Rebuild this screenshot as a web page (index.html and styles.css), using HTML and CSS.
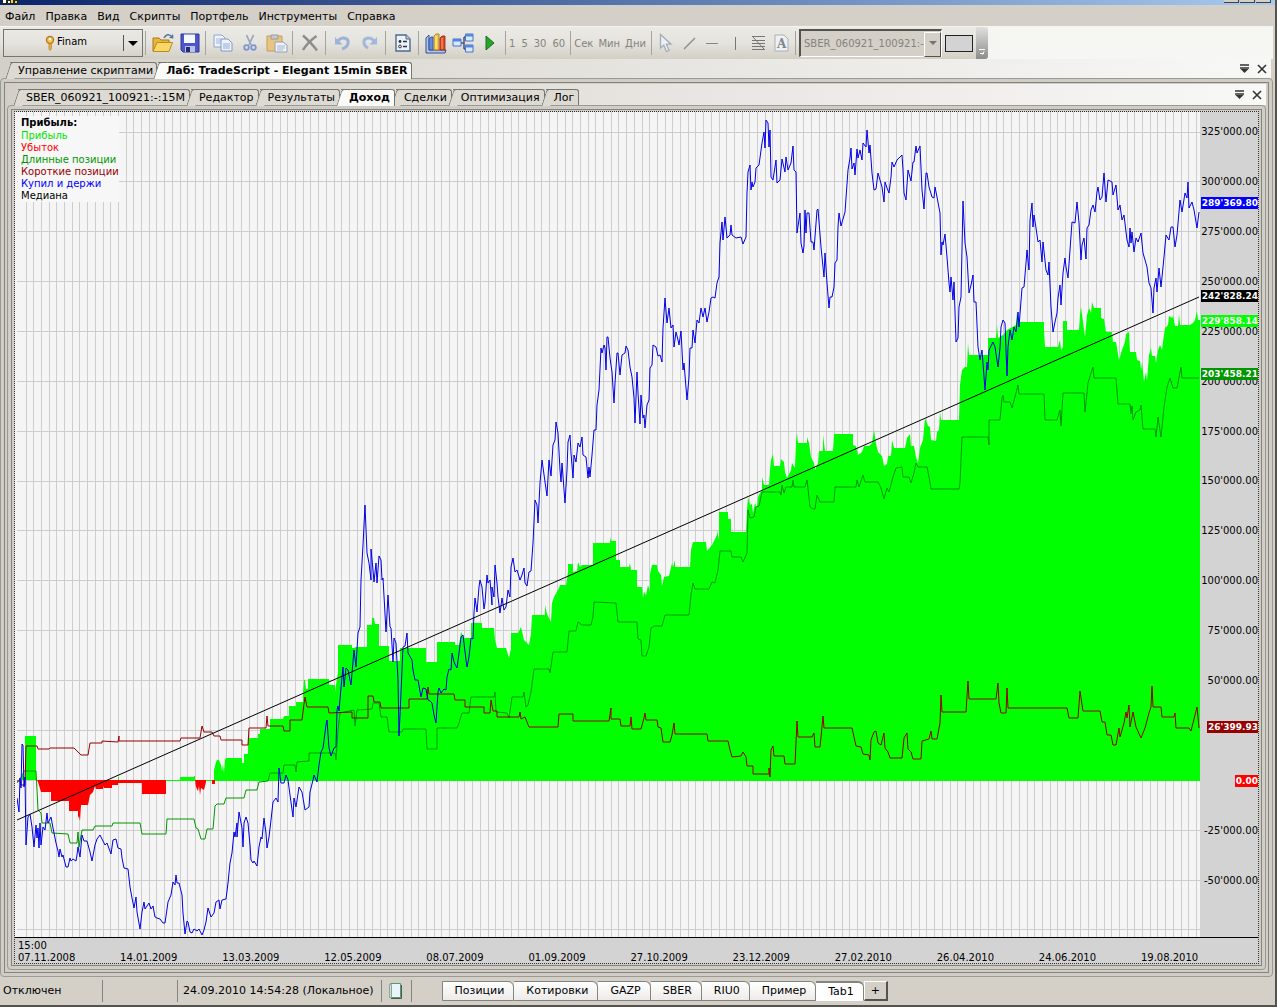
FILE: index.html
```html
<!DOCTYPE html>
<html lang="ru">
<head>
  <meta charset="UTF-8" />
  <meta name="viewport" content="width=device-width, initial-scale=1.0"/>
  <title>TSLab</title>
  <link rel="stylesheet" href="styles.css">
</head>
<body>
<div class="window">
  <header class="titlebar">
    <svg class="title-icon" width="16" height="4" viewBox="0 0 16 4"><path d="M0 0h16v4H0z" fill="#222"/><path d="M1 0h3v3H1zM6 1h2v2H6z" fill="#fff"/><path d="M9 0h2v3H9zM13 1h2v2h-2z" fill="#f2d43c"/></svg>
    <div class="title-buttons"><span></span><span></span><span></span></div>
  </header>

  <nav class="menubar">
    <a href="#">Файл</a>
    <a href="#">Правка</a>
    <a href="#">Вид</a>
    <a href="#">Скрипты</a>
    <a href="#">Портфель</a>
    <a href="#">Инструменты</a>
    <a href="#">Справка</a>
  </nav>

  <div class="tray">
    <div class="toolbar">
      <div class="provider">
        <svg class="key" width="10" height="16" viewBox="0 0 10 16"><circle cx="5" cy="5" r="3.5" fill="#f5c45c" stroke="#b87a1c" stroke-width="1.4"/><circle cx="5" cy="4" r="1.2" fill="#fff"/><path d="M4 8.5h2.4v5L5 15.500 4 14z" fill="#eeb048" stroke="#b87a1c" stroke-width=".7"/></svg>
        <select aria-label="Поставщик данных"><option>Finam</option></select>
      </div>
      <i class="sep"></i>
      <button class="tool" aria-label="Открыть"><svg width="22" height="20" viewBox="0 0 22 20"><path d="M1 18V5h6l2 2h8v4" fill="#e9b437" stroke="#a97a18"/><path d="M1 18.500 5 9.500h15.500L17 18.500z" fill="#fbd768" stroke="#b98a20"/><path d="M12 5c2-4 5-4 7-2" fill="none" stroke="#54779c" stroke-width="1.600"/><path d="M17 5l4.500.5L21 1z" fill="#54779c"/></svg></button>
      <button class="tool" aria-label="Сохранить"><svg width="20" height="20" viewBox="0 0 20 20"><path d="M1 1h18v18H3l-2-2z" fill="#4c55c9" stroke="#31379a"/><path d="M4 1.500h11V10H4z" fill="#f6f8ff"/><path d="M5 13h10v6H5z" fill="#b9c3e8"/><path d="M6 14h4v5H6z" fill="#252a72"/></svg></button>
      <i class="sep"></i>
      <button class="tool" disabled aria-label="Копировать"><svg width="20" height="18" viewBox="0 0 20 18"><path d="M1 1h8l3 3v9H1z" fill="#edf2fb" stroke="#8ea6cf"/><path d="M3 5h5M3 7h7M3 9h7" stroke="#a4b9dc"/><path d="M8 5h7l4 4v8H8z" fill="#edf2fb" stroke="#8198c4"/><path d="M10 10h7M10 12h7M10 14h7" stroke="#94abd3"/></svg></button>
      <button class="tool" disabled aria-label="Вырезать"><svg width="14" height="18" viewBox="0 0 14 18"><path d="M3.500 1 8 11M10.500 1 6 11" stroke="#9aa7bd" stroke-width="1.800" fill="none"/><circle cx="3.500" cy="13.500" r="2.300" fill="none" stroke="#7d96cf" stroke-width="1.800"/><circle cx="10.500" cy="13.500" r="2.300" fill="none" stroke="#7d96cf" stroke-width="1.800"/></svg></button>
      <button class="tool" disabled aria-label="Вставить"><svg width="22" height="19" viewBox="0 0 22 19"><path d="M1 2h15v15H1z" fill="#e9c581" stroke="#c39f5c"/><path d="M5 1h7v4H5z" fill="#c6c9cf" stroke="#989ba3"/><path d="M9 8h8l4 3v7H9z" fill="#eff2f8" stroke="#93a0b6"/><path d="M11 12h8M11 14h8M11 16h6" stroke="#a9b6ca"/></svg></button>
      <i class="sep"></i>
      <button class="tool" disabled aria-label="Удалить"><svg width="18" height="18" viewBox="0 0 18 18"><path d="M2 1.500C7 6 12 11 16 16.500M15.500 2C10 6 5 11 2 16" fill="none" stroke="#8d8d8b" stroke-width="2.400"/></svg></button>
      <i class="sep"></i>
      <button class="tool" disabled aria-label="Отменить"><svg width="17" height="16" viewBox="0 0 17 16"><path d="M4 6C8 1 15 3 14 8c0 3-3 5-6 6" fill="none" stroke="#9db1da" stroke-width="3"/><path d="M1 2v7.500h7.500z" fill="#9db1da"/></svg></button>
      <button class="tool" disabled aria-label="Вернуть"><svg width="17" height="16" viewBox="0 0 17 16"><path d="M13 6C9 1 2 3 3 8c0 3 2 4 4 5" fill="none" stroke="#9fb8dc" stroke-width="3"/><path d="M16 2v7.500H8.500z" fill="#9fb8dc"/></svg></button>
      <i class="sep"></i>
      <button class="tool" aria-label="Свойства"><svg width="16" height="18" viewBox="0 0 16 18"><path d="M1 1h10l4 4v12H1z" fill="#eaf2fb" stroke="#52698c" stroke-width="1.400"/><path d="M11 1v4h4" fill="#bccde4" stroke="#52698c"/><circle cx="5" cy="7.500" r="1.400" fill="#333"/><circle cx="5" cy="12.500" r="1.400" fill="none" stroke="#333"/><path d="M8 7.500h4M8 12.500h4" stroke="#333" stroke-width="1.500"/></svg></button>
      <i class="sep"></i>
      <button class="tool" aria-label="Лаборатория"><svg width="22" height="21" viewBox="0 0 22 21"><path d="M1 5v15h19l1-3H4V2z" fill="#b6c6e4" stroke="#35518e"/><path d="M4 6l2-2h2v13H4z" fill="#5f8be0" stroke="#2c4b98" stroke-width=".8"/><path d="M9 3l2-2h3v16H9z" fill="#f6c644" stroke="#9a7418" stroke-width=".8"/><path d="M15 5l2-2h3v14h-5z" fill="#e34a2c" stroke="#8c2312" stroke-width=".8"/><path d="M11 3v13" stroke="#fff0b0"/><path d="M17 5v11" stroke="#ff9a7c"/></svg></button>
      <button class="tool" aria-label="Схема"><svg width="22" height="20" viewBox="0 0 22 20"><path d="M8 10h4M12 4v12M12 4h3M12 16h3" fill="none" stroke="#46566f" stroke-width="1.500"/><path d="M1 6h8v7H1zM13.500 1h7.500v7h-7.500zM13.500 12H21v7h-7.500z" fill="#d9e8ff" stroke="#4772c8"/><path d="M1 6h8v2.500H1zM13.500 1h7.500v2.500h-7.500zM13.500 12H21v2.500h-7.500z" fill="#5686df"/></svg></button>
      <button class="tool" aria-label="Запуск"><svg width="10" height="16" viewBox="0 0 10 16"><path d="M1 1l8 7-8 7z" fill="#27a52b" stroke="#16701b"/></svg></button>
      <i class="sep"></i>
      <div class="intervals">
        <button disabled>1</button>
        <button disabled>5</button>
        <button disabled>30</button>
        <button disabled>60</button>
      </div>
      <i class="sep"></i>
      <div class="units">
        <button disabled>Сек</button>
        <button disabled>Мин</button>
        <button disabled>Дни</button>
      </div>
      <i class="sep"></i>
      <button class="tool small" disabled aria-label="Указатель"><svg width="14" height="20" viewBox="0 0 14 20"><path d="M1.500 1.500v13.500l3.300-3 2.600 6.500 2.600-1-2.600-6.300H12z" fill="#edf0f4" stroke="#a3adba" stroke-width="1.300"/></svg></button>
      <button class="tool small" disabled aria-label="Линия"><svg width="13" height="13" viewBox="0 0 13 13"><path d="M1 12 12 1" stroke="#888" stroke-width="1.300"/></svg></button>
      <button class="tool small" disabled aria-label="Горизонтальная линия"><svg width="12" height="3" viewBox="0 0 12 3"><path d="M0 1.500h12" stroke="#888"/></svg></button>
      <button class="tool small" disabled aria-label="Вертикальная линия"><svg width="3" height="13" viewBox="0 0 3 13"><path d="M1.500 0v13" stroke="#777"/></svg></button>
      <button class="tool small" disabled aria-label="Уровни Фибоначчи"><svg width="13" height="14" viewBox="0 0 13 14"><path d="M0 .5h13M0 4.500h13M0 7.500h13M0 10.500h13M0 13.500h13M1 1l11 12" stroke="#777" fill="none"/></svg></button>
      <button class="tool small" disabled aria-label="Текст"><svg width="15" height="18" viewBox="0 0 15 18"><path d="M1 1h9l4 4v12H1z" fill="#eef0f2" stroke="#a8b0ba"/><text x="3" y="14" class="letter">A</text></svg></button>
      <i class="sep"></i>
      <div class="source">
        <select disabled aria-label="Источник"><option>SBER_060921_100921:-</option></select>
      </div>
      <button class="swatch" aria-label="Цвет"></button>
      <button class="overflow" aria-label="Ещё"><svg width="6" height="6" viewBox="0 0 6 6"><path d="M0 .5h6M1 4.500h4M5 2.500 3.500 5.500" stroke="#fff" fill="none"/></svg></button>
    </div>
  </div>

  <div class="tabs tabs-main">
    <a href="#" class="tab">Управление скриптами</a>
    <a href="#" class="tab active">Лаб: TradeScript - Elegant 15min SBER</a>
    <div class="tab-tools">
      <button aria-label="Список"><svg width="9" height="9" viewBox="0 0 9 9"><path d="M0 1h9M0 4h9" stroke="#333" stroke-width="1.400"/><path d="M.5 5h8l-4 4z" fill="#333"/></svg></button>
      <button aria-label="Закрыть"><svg width="10" height="10" viewBox="0 0 10 10"><path d="M1 1l8 8M9 1 1 9" stroke="#333" stroke-width="1.600"/></svg></button>
    </div>
  </div>

  <main class="frame outer">
    <div class="frame-body">
      <div class="tabs">
        <a href="#" class="tab">SBER_060921_100921:-:15M</a>
        <a href="#" class="tab">Редактор</a>
        <a href="#" class="tab">Результаты</a>
        <a href="#" class="tab active">Доход</a>
        <a href="#" class="tab">Сделки</a>
        <a href="#" class="tab">Оптимизация</a>
        <a href="#" class="tab">Лог</a>
        <div class="tab-tools">
          <button aria-label="Список"><svg width="9" height="9" viewBox="0 0 9 9"><path d="M0 1h9M0 4h9" stroke="#333" stroke-width="1.400"/><path d="M.5 5h8l-4 4z" fill="#333"/></svg></button>
          <button aria-label="Закрыть"><svg width="10" height="10" viewBox="0 0 10 10"><path d="M1 1l8 8M9 1 1 9" stroke="#333" stroke-width="1.600"/></svg></button>
        </div>
      </div>
      <section class="frame inner">
        <div class="frame-body">
          <div class="chart">
            <div class="plot">
              <svg class="plot-svg" viewBox="17 112 1183 825" preserveAspectRatio="none">
                <path id="grid" class="grid" d=""/>
                <path class="profit" d="M22 780V776H24V780zM25 780V736H36V780zM118 780V777H119V780zM166 781V780H180V777H194V776H195V780H214V781z"/>
                <path class="profit" d="M214 780V770L216 762 217 760H219L221 765 222 771 223 764 224 773 225 760 226 758H242V763H244V754H248V738H258V734H260V729H270V719H283L284 716H289V706H296V702H303V694L304 680H305L306 689H308V679H329V685H335V692L338 672V645H352V648H354L356 647H367V625H372V618H374L375 624H379V646H389V661H400V648H426V662H437V642H455V645H459L461 632 464 638H471V623H482V628H494L495 640 497 648H506L509 658 511 648V633H518L521 627 524 640 529 645 531 634 532 615H545V605L547 614 551 622 552 603 554 597 559 588 560 585H566L568 572V564H573V572L577 571 578 562 580 567 582 565H593V543H610V537L611 541H616V560H620V567H629L630 563 631 570H637V587H642L643 598 644 592 646 595 648 585 650 592V574L652 565H657L658 571 661 575 662 586 664 577 669 576 672 563 673 567 675 560V567H690L691 550 693 542H706L707 551 712 545 717 535V530L719 540V512H728V519H731V532H746L747 510 748 497 750 505 752 504 753 513 755 503 757 508 758 497 760 493 762 490V477L764 485H769L770 470 771 460 773 454 774 466H780L781 459 784 462 785 472 787 478 791 470 792 463 795 468 796 443 797 433 798 443H807V437L809 443 811 457 814 463 815 470 818 463 819 451H823V435L825 451H833L834 434H853V445L856 446 858 455 862 452 864 446H869L872 443 874 430 876 444 878 452 882 456 884 466 887 464 888 456H891L892 440 894 448H905L907 438 910 434 911 446H914L916 457 918 463 920 448 923 440 925 418 928 426 930 427 931 440 936 441 937 432 939 430 940 412 941 420H959L960 385 962 370 965 367H967L968 343 969 355H988V338H996L997 325 998 338 1003 335 1007 330 1016 325 1017 312 1019 322H1044V330L1045 347H1058L1060 340 1061 350 1063 347V321H1067V330H1079L1080 315 1081 307 1083 322 1085 337 1087 315 1089 308 1091 313 1092 302 1094 308H1101V318L1104 319 1106 332H1112L1113 342H1116L1119 360 1122 350 1125 342 1126 334 1129 332 1130 352H1136L1137 360 1140 361 1141 370 1142 362 1144 382 1146 372 1147 380 1149 355 1151 348 1152 356H1155L1156 363 1158 350 1160 345 1162 350 1163 342 1165 328 1168 325 1169 316 1172 318 1173 316 1175 326H1178L1179 314 1180 325H1190L1193 323 1195 320 1197 311 1198 320H1200V781H214z"/>
                <path class="loss" d="M37 780 38 782 41 792H51V801H69V811H78V818L79 816 80 821 81 805H88L90 795 93 792 95 786 96 789H103V786L104 788H112V785H118V783H142V794H166V780zM195 780 196 787 198 791 199 786 200 795 201 788 204 790 206 782V780zM212 780V784H215V780z"/>
                <polyline class="line long" points="17,783 22,776 24,771 36,771 37,790 38,810 41,813 42,823 50,823 52,833 68,834 70,843 77,843 78,832 79,847 82,830 93,830 95,826 112,826 113,823 140,823 142,834 166,834 167,819 194,819 196,828 198,829 201,839 205,839 207,829 213,829 215,806 217,804 224,804 226,798 244,798 246,790 257,790 259,782 268,781 270,773 283,773 284,765 295,765 296,772 297,762 309,761 309,753 335,753 336,760 338,730 340,713 354,710 355,726 357,710 372,709 373,703 379,703 381,717 387,717 389,732 402,732 403,729 426,729 427,749 437,749 437,728 457,728 459,723 462,713 469,713 471,697 494,697 495,692 496,712 507,713 509,718 512,697 523,697 524,692 526,707 528,705 531,692 534,669 549,669 550,673 553,652 567,652 569,631 576,631 578,622 582,625 591,625 593,617 594,602 616,603 618,622 637,622 638,639 641,640 642,656 646,656 649,647 651,628 654,626 662,626 665,615 689,615 691,595 693,583 695,589 709,589 712,582 715,583 718,570 720,551 731,551 732,557 741,557 743,562 747,553 748,510 750,518 754,517 756,507 759,506 762,492 780,492 781,495 782,485 784,493 786,487 792,487 793,480 794,487 805,487 807,480 810,507 813,509 815,509 817,495 820,502 834,502 835,487 856,487 857,480 859,487 863,475 865,482 878,482 881,488 884,499 887,488 889,492 893,477 896,468 902,467 903,477 909,477 911,483 914,473 916,463 918,467 927,467 929,477 931,489 959,489 960,483 962,437 988,437 989,445 989,420 1000,420 1002,398 1003,395 1004,402 1010,402 1012,408 1016,393 1018,385 1019,394 1044,394 1045,420 1057,420 1060,410 1061,426 1063,393 1084,393 1085,412 1087,393 1088,383 1091,373 1093,367 1094,378 1116,378 1118,404 1130,404 1131,414 1132,406 1133,420 1136,412 1140,410 1141,405 1143,429 1155,429 1156,437 1158,417 1161,437 1164,407 1167,387 1170,378 1173,388 1177,388 1181,367 1182,378 1199,378"/>
                <polyline class="line short" points="17,781 21,781 21,785 25,785 26,746 37,746 38,749 49,749 50,748 74,748 78,752 81,755 88,755 90,743 102,743 102,741 118,742 119,736 119,741 180,741 181,738 200,738 202,726 204,732 212,732 214,736 220,736 221,740 242,740 242,745 248,745 249,728 266,728 267,716 268,726 283,726 284,731 290,731 290,720 302,720 304,704 305,697 307,707 328,707 329,713 352,712 352,718 368,718 368,696 373,696 374,702 380,702 381,708 409,708 409,699 427,699 428,687 429,694 454,694 455,700 465,700 465,707 484,707 484,713 490,713 491,700 493,711 497,711 497,717 519,717 520,712 521,719 525,717 529,727 558,727 559,714 573,714 573,721 609,721 611,708 611,719 620,719 621,726 630,726 631,717 632,729 641,729 644,718 645,713 646,720 657,720 658,727 661,728 663,742 670,742 672,735 674,723 675,734 707,734 708,741 728,741 730,750 732,757 741,756 743,752 746,757 747,766 753,766 753,774 769,774 769,768 770,777 771,750 773,746 774,756 784,756 785,764 795,764 797,721 798,737 812,737 814,733 815,747 820,747 822,727 823,716 824,728 852,728 854,737 856,746 861,747 863,754 869,755 870,760 871,740 874,732 876,731 878,743 881,745 884,733 885,748 888,752 890,758 902,758 904,738 907,733 908,749 911,752 913,759 921,759 922,741 929,739 931,731 932,739 937,739 940,723 941,695 942,712 966,712 968,681 969,699 996,699 998,683 999,703 1001,713 1006,713 1007,688 1008,708 1067,708 1069,718 1078,718 1080,691 1083,711 1100,711 1102,722 1105,722 1107,735 1111,735 1113,745 1116,745 1119,728 1120,737 1124,723 1126,712 1127,718 1129,705 1130,727 1133,712 1136,727 1141,738 1145,728 1149,713 1151,707 1152,686 1153,707 1161,707 1162,717 1174,717 1175,713 1176,728 1189,728 1191,731 1193,723 1197,707 1199,728"/>
                <polyline class="line hold" points="17,798 19,812 20,778 21,788 22,744 23,745 24,787 25,777 26,845 28,817 30,814 32,827 34,847 36,825 37,838 38,828 39,848 40,823 41,845 43,827 45,830 47,813 48,823 51,817 53,828 56,843 58,851 59,857 60,849 62,857 63,855 66,867 68,867 70,858 71,861 73,859 76,861 77,855 78,847 80,857 82,835 84,841 87,841 90,852 92,861 95,845 97,839 100,835 102,839 105,845 107,843 111,854 113,840 116,839 118,848 121,849 122,858 124,868 128,869 130,887 132,898 134,908 136,897 137,912 140,929 142,912 144,902 145,909 149,903 151,909 153,906 155,917 157,918 160,919 163,923 165,923 168,902 171,895 173,882 175,885 176,875 177,883 179,883 182,895 183,913 185,934 187,921 188,922 190,932 192,933 194,929 197,931 199,929 202,935 204,930 206,922 208,908 211,917 214,913 216,902 219,900 220,909 222,900 226,899 228,883 230,863 232,853 234,832 235,837 237,823 237,837 239,812 242,828 243,847 244,823 246,817 248,823 250,845 251,860 253,863 254,861 257,866 259,847 261,837 262,839 264,818 266,833 267,848 269,837 271,820 273,802 276,798 278,802 279,768 281,783 284,783 286,775 288,780 290,795 293,817 294,798 296,807 299,787 302,792 305,810 309,807 310,792 313,780 314,775 317,782 319,765 321,752 323,748 326,725 327,720 329,748 331,756 334,748 336,747 337,710 338,706 339,711 341,688 343,667 344,687 346,668 348,670 351,685 354,650 356,667 357,650 358,633 360,627 361,580 363,545 365,505 367,553 369,563 371,580 371,549 373,570 374,582 376,563 377,583 379,556 381,560 382,580 383,578 386,632 388,595 390,627 391,628 393,662 394,638 396,643 398,680 399,736 401,693 403,647 405,646 407,633 408,653 412,660 413,670 415,680 418,680 421,697 423,688 426,689 428,700 430,701 432,703 434,715 436,723 438,692 439,688 441,693 444,689 446,690 447,677 449,669 451,670 452,653 454,662 457,668 459,653 461,637 463,635 466,660 467,667 469,657 471,638 473,639 474,613 475,598 477,612 479,587 480,580 482,587 484,609 485,603 487,575 488,583 490,580 492,605 492,587 494,597 495,565 497,583 498,597 500,613 502,598 504,610 506,607 508,590 510,597 511,567 513,558 515,572 517,570 520,580 522,575 524,568 525,583 527,586 529,572 531,571 533,543 535,500 537,505 538,523 540,483 542,460 545,482 547,496 549,460 551,476 553,445 555,440 556,422 558,433 560,470 561,482 562,463 565,503 567,470 568,442 570,435 571,453 573,478 574,455 576,462 578,443 580,447 582,437 583,455 586,457 588,478 589,467 590,477 592,455 594,430 596,430 597,405 599,390 601,348 602,353 604,345 605,348 606,370 607,337 608,337 610,358 612,372 614,403 615,383 617,353 618,353 620,375 622,355 625,353 626,346 628,350 630,367 632,377 634,398 635,423 637,372 638,393 640,424 641,395 643,418 644,415 645,428 647,405 649,400 650,368 652,365 653,345 656,347 658,356 660,355 662,362 663,328 665,298 667,323 669,308 670,318 671,328 673,325 674,347 676,332 678,340 679,345 681,331 683,370 684,363 687,400 689,377 690,348 692,348 693,330 695,343 697,320 699,323 701,308 703,317 705,308 707,322 709,312 711,298 713,297 715,298 717,283 719,277 720,243 722,222 723,240 725,217 727,238 730,235 731,225 732,235 736,238 741,237 743,244 746,237 747,193 748,172 750,165 751,190 752,182 753,187 755,182 756,168 759,165 762,143 764,132 765,148 766,120 768,123 769,147 770,130 771,177 773,180 776,160 777,183 780,180 782,159 785,172 786,157 788,170 791,163 793,146 794,170 796,172 797,233 800,213 801,243 803,253 804,246 805,210 806,233 807,213 809,213 811,242 813,242 814,250 817,210 818,209 821,247 824,277 825,253 827,283 829,308 830,297 832,297 834,287 835,263 837,260 838,227 839,213 841,226 845,212 848,170 850,158 851,148 852,169 854,163 855,175 857,149 858,158 860,150 862,160 863,143 866,147 867,130 869,153 870,145 872,173 874,190 876,189 878,173 880,180 882,187 884,202 885,182 887,188 889,193 891,177 892,162 894,167 897,160 902,155 903,170 904,193 906,200 908,170 911,181 913,162 914,162 916,146 917,153 920,146 922,190 924,209 926,173 927,173 929,187 932,197 934,198 935,187 937,197 940,213 941,255 942,242 943,245 945,234 947,257 949,283 950,292 951,277 953,300 954,282 956,342 958,338 959,307 961,297 963,201 965,243 967,257 969,293 971,285 973,275 974,302 976,302 978,347 980,360 982,350 985,390 987,362 988,370 989,350 993,342 995,347 998,367 1000,348 1001,327 1003,320 1005,323 1007,376 1008,347 1010,330 1012,340 1014,327 1016,332 1018,312 1019,327 1022,288 1024,287 1026,263 1027,250 1029,270 1030,220 1032,203 1033,227 1034,215 1036,228 1038,242 1040,240 1042,262 1043,242 1046,270 1048,275 1049,262 1051,307 1053,332 1055,322 1057,313 1058,298 1060,285 1061,305 1063,273 1065,258 1066,267 1068,278 1070,250 1072,222 1075,223 1077,202 1079,223 1081,260 1082,245 1084,238 1086,259 1087,228 1089,225 1091,210 1093,205 1095,212 1097,192 1098,187 1100,200 1102,197 1104,173 1106,202 1108,180 1112,182 1113,195 1116,185 1118,210 1120,205 1122,220 1124,215 1126,232 1127,240 1129,247 1130,228 1131,243 1132,232 1134,252 1136,238 1138,242 1141,233 1143,253 1147,267 1149,283 1151,288 1153,313 1154,288 1156,278 1157,292 1159,268 1161,287 1164,257 1166,235 1169,240 1171,227 1173,227 1175,247 1177,235 1180,200 1182,212 1185,193 1187,198 1188,182 1189,208 1192,202 1194,210 1197,228 1199,212"/>
                <path class="line median" d="M17 820 1199 297"/>
              </svg>
              <ul class="legend">
                <li class="title">Прибыль:</li>
                <li class="c-profit">Прибыль</li>
                <li class="c-loss">Убыток</li>
                <li class="c-long">Длинные позиции</li>
                <li class="c-short">Короткие позиции</li>
                <li class="c-hold">Купил и держи</li>
                <li>Медиана</li>
              </ul>
            </div>
            <div class="axis-y">
              <span>325'000.00</span>
              <span>300'000.00</span>
              <span>275'000.00</span>
              <span>250'000.00</span>
              <span>225'000.00</span>
              <span>200'000.00</span>
              <span>175'000.00</span>
              <span>150'000.00</span>
              <span>125'000.00</span>
              <span>100'000.00</span>
              <span>75'000.00</span>
              <span>50'000.00</span>
              <!-- 25'000 is covered by the short positions tag -->
              <span></span>
              <span class="tag t-loss">0.00</span>
              <span>-25'000.00</span>
              <span>-50'000.00</span>
              <b class="tag mark t-hold" style="top: 11%">289'369.80</b>
              <b class="tag mark t-median" style="top: 22.300%">242'828.24</b>
              <b class="tag mark t-profit" style="top: 25.300%">229'858.14</b>
              <b class="tag mark t-long" style="top: 31.800%">203'458.21</b>
              <b class="tag mark t-short" style="top: 74.600%">26'399.93</b>
            </div>
            <div class="axis-x">
              <div class="time">15:00</div>
              <div class="dates">
                <span>07.11.2008</span>
                <span>14.01.2009</span>
                <span>13.03.2009</span>
                <span>12.05.2009</span>
                <span>08.07.2009</span>
                <span>01.09.2009</span>
                <span>27.10.2009</span>
                <span>23.12.2009</span>
                <span>27.02.2010</span>
                <span>26.04.2010</span>
                <span>24.06.2010</span>
                <span>19.08.2010</span>
              </div>
            </div>
          </div>
        </div>
      </section>
    </div>
  </main>

  <footer class="statusbar">
    <span class="status">Отключен</span>
    <span class="status-empty"></span>
    <span class="clock">24.09.2010 14:54:28 (Локальное)</span>
    <button class="log" aria-label="Журнал"><svg width="13" height="16" viewBox="0 0 13 16"><path d="M1.500.5h10v14h-10z" fill="#e9f5fb" stroke="#5a9a6a"/><path d="M.5 1.500h2v13h-2z" fill="#cfe0d4" stroke="#8aa894"/><path d="M2 15.500h10.500V2" fill="none" stroke="#4b5a50"/></svg></button>
    <nav class="sheets">
      <a href="#">Позиции</a>
      <a href="#">Котировки</a>
      <a href="#">GAZP</a>
      <a href="#">SBER</a>
      <a href="#">RIU0</a>
      <a href="#">Пример</a>
      <a href="#" class="active">Tab1</a>
      <button>+</button>
    </nav>
  </footer>
</div>
<script src="script.js"></script>
</body>
</html>
```
FILE: styles.css
```css
* {
  box-sizing: border-box;
}

body {
  margin: 0;
  background: #d4d0c8;
  color: #000;
  font-family: "DejaVu Sans", Verdana, sans-serif;
  font-size: 11px;
}

a {
  color: inherit;
  text-decoration: none;
}

button,
select {
  font-family: inherit;
  font-size: 10px;
  margin: 0;
  padding: 0;
  border: none;
  background: none;
  color: #000;
}

button:disabled,
select:disabled {
  color: #85837d;
  opacity: 1;
}

.window {
  display: flex;
  flex-direction: column;
  height: 100vh;
  border-right: 2px solid #55534e;
  border-bottom: 2px solid #55534e;
}

/* title bar, cut off by the top of the screen */
.titlebar {
  display: flex;
  justify-content: space-between;
  align-items: flex-start;
  height: 5px;
  padding: 0 4px 0 2px;
  background: linear-gradient(to right, #0a246a, #a6caf0);
}

.title-buttons {
  display: flex;
  gap: 1px;
}

.title-buttons span {
  width: 15px;
  height: 3px;
  background: #d4d0c8;
  border-right: 1px solid #404040;
  border-bottom: 1px solid #404040;
}

.menubar {
  display: flex;
  gap: 10px;
  height: 21px;
  padding: 0 5px;
  line-height: 23px;
}

.tray {
  display: flex;
  height: 33px;
  margin-right: 2px;
  border-top: 1px solid #f4f3f0;
  background: linear-gradient(to right, #d4d0c8, #f6f6f3 80%);
}

.toolbar {
  display: flex;
  align-items: center;
  height: 32px;
  padding-left: 3px;
  border-radius: 0 4px 4px 0;
  background: linear-gradient(#ebeae6, #e4e3dd 50%, #d2cfc5);
}

.provider {
  position: relative;
  width: 140px;
  height: 28px;
  border: 1px solid #77756f;
}

.provider .key {
  position: absolute;
  left: 41px;
  top: 5px;
}

.provider select,
.source select {
  appearance: none;
  width: 100%;
  height: 100%;
}

.provider select {
  padding: 0 0 3px 53px;
}

.provider::after {
  content: "";
  position: absolute;
  right: 4px;
  top: 11px;
  border: 5px solid transparent;
  border-top-color: #000;
  border-bottom: none;
}

.provider::before {
  content: "";
  position: absolute;
  right: 18px;
  top: 5px;
  height: 16px;
  border-left: 1px solid #55534e;
}

.sep {
  width: 1px;
  height: 24px;
  margin: 0 3px 0 2px;
  background: #a5a39c;
}

.tool {
  display: flex;
  align-items: center;
  justify-content: center;
  width: 27px;
  height: 26px;
}

.tool.small {
  width: 23px;
}

.letter {
  font: bold 12px "DejaVu Serif", serif;
  fill: #7f858d;
}

.intervals,
.units {
  display: flex;
  gap: 6px;
  padding-right: 3px;
}

.units {
  gap: 5px;
}

.source {
  position: relative;
  width: 143px;
  height: 28px;
  border: 2px solid #55534e;
  border-right: 1px solid #fff;
  border-bottom: 1px solid #fff;
  background: #d4d0c8;
}

.source select {
  padding-left: 3px;
  line-height: 16px;
}

.source::before {
  content: "";
  position: absolute;
  right: 0;
  top: 1px;
  width: 15px;
  height: 23px;
  border: 1px solid #fff;
  border-right-color: #55534e;
  border-bottom-color: #55534e;
  background: #d4d0c8;
  pointer-events: none;
}

.source::after {
  content: "";
  position: absolute;
  right: 4px;
  top: 10px;
  border: 4px solid transparent;
  border-top-color: #77756f;
  border-bottom: none;
}

.swatch {
  width: 28px;
  height: 17px;
  margin: 0 3px;
  border: 1px solid #222;
  background: #d3d3d3;
}

.overflow {
  display: flex;
  align-items: flex-end;
  justify-content: center;
  width: 12px;
  height: 32px;
  padding-bottom: 4px;
  border-radius: 0 3px 3px 0;
  background: linear-gradient(#e0e0de, #8c8c8a);
}

/* tabs */
.tabs {
  display: flex;
  align-items: flex-end;
  height: 21px;
  padding-left: 11px;
  background: linear-gradient(to right, #d4d0c8, #f8f8f7);
}

.tabs-main {
  height: 19px;
  margin-right: 4px;
  padding-left: 10px;
}

.tab {
  position: relative;
  height: 16px;
  margin-right: 1px;
  padding: 0 4px 0 8px;
  border-top: 1px solid #77756f;
  border-right: 1px solid #77756f;
  border-radius: 0 3px 0 0;
  background: #dddad3;
  line-height: 15px;
  white-space: nowrap;
}

.tabs-main .tab {
  padding-right: 3px;
}

/* slanted left edge */
.tab::before {
  content: "";
  position: absolute;
  left: -2px;
  top: -1px;
  width: 8px;
  height: 16px;
  border-left: 1px solid #77756f;
  border-top: 1px solid #77756f;
  border-radius: 3px 0 0 0;
  background: inherit;
  transform: skewX(-18deg);
}

.tab.active {
  margin-bottom: -1px;
  height: 17px;
  background: #fafaf9;
  font-weight: bold;
  z-index: 1;
}

.tab-tools {
  display: flex;
  align-self: center;
  gap: 8px;
  margin-left: auto;
  padding-right: 4px;
}

.tab-tools button {
  display: flex;
  align-items: center;
}

/* nested frames round the chart */
.frame {
  flex: 1;
  display: flex;
  min-height: 0;
  padding: 3px;
  border: 1px solid #9b9993;
  border-radius: 4px;
  background: #d0cdc6;
}

.frame.outer {
  margin-right: 2px;
}

.frame-body {
  flex: 1;
  display: flex;
  flex-direction: column;
  min-width: 0;
  min-height: 0;
  border: 1px solid #85837d;
}

.outer > .frame-body {
  padding: 1px 2px 2px 2px;
}

.inner > .frame-body {
  padding: 1px 2px;
}

.chart {
  flex: 1;
  display: grid;
  grid-template-columns: 1fr 58px;
  grid-template-rows: 1fr 26px;
  min-height: 0;
  border: 1px dotted #333;
  background: #d3d3d3;
}

.plot {
  position: relative;
  min-height: 0;
  padding-left: 2px;
  background: #f5f5f5;
}

.plot-svg {
  display: block;
  width: 100%;
  height: 100%;
}

.grid {
  fill: none;
  stroke: #cdcdcd;
  shape-rendering: crispEdges;
  vector-effect: non-scaling-stroke;
}

.line {
  fill: none;
  stroke-width: 1;
  vector-effect: non-scaling-stroke;
}

.profit { fill: #00ff00; }
.loss { fill: #ff0000; }
.long { stroke: #009600; }
.short { stroke: #960000; }
.hold { stroke: #0000e6; }
.median { stroke: #000; }

.legend {
  position: absolute;
  left: 3px;
  top: 4px;
  margin: 0;
  padding: 0 0 0 3px;
  list-style: none;
  background: #f7f7f7;
  font-size: 10px;
  line-height: 12px;
}

.legend .title {
  font-weight: bold;
  line-height: 14px;
}

.c-profit { color: #00e600; }
.c-loss { color: #ff0000; }
.c-long { color: #009600; }
.c-short { color: #960000; }
.c-hold { color: #0000ff; }

.axis-y {
  position: relative;
  display: flex;
  flex-direction: column;
  justify-content: space-between;
  align-items: flex-end;
  padding: 14px 0 50px;
  font-size: 10px;
  line-height: 12px;
}

.axis-y span {
  height: 12px;
}

.axis-y .tag {
  padding: 0 0 0 1px;
  color: #fff;
  font-size: 9px;
  font-weight: bold;
}

.axis-y .mark {
  position: absolute;
  right: 0;
  transform: translateY(-50%);
}

.t-loss { background: #ff0000; }
.t-hold { background: #0000ff; }
.t-median { background: #000; }
.t-profit { background: #00ff00; }
.t-long { background: #009600; }
.t-short { background: #960000; }

.axis-x {
  grid-column: 1 / 3;
  padding: 2px 15px 0 3px;
  border-top: 1px solid #000;
  font-size: 10px;
  line-height: 12px;
}

.dates {
  display: grid;
  grid-template-columns: repeat(12, 1fr);
}

/* status bar */
.statusbar {
  display: flex;
  align-items: center;
  height: 28px;
  padding-left: 3px;
}

.statusbar > span,
.log {
  height: 22px;
  border-right: 1px solid #85837d;
  line-height: 22px;
}

.status {
  width: 100px;
}

.status-empty {
  width: 75px;
}

.clock {
  padding: 0 7px 0 5px;
}

.log {
  display: flex;
  align-items: center;
  width: 30px;
  padding-left: 7px;
}

.sheets {
  display: flex;
  align-items: center;
  margin-left: 30px;
}

.sheets a {
  height: 20px;
  padding: 0 9px 0 12px;
  border: 1px solid #85837d;
  border-left-width: 0;
  border-radius: 0 6px 0 0;
  background: linear-gradient(#fff, #ecebe9);
  line-height: 18px;
}

.sheets a:first-child {
  border-left-width: 1px;
}

.sheets a.active {
  background: #fff;
  border-top-width: 2px;
  border-bottom-color: #fff;
}

.sheets button {
  width: 24px;
  height: 20px;
  border: 1px solid #fff;
  border-right: 2px solid #55534e;
  border-bottom: 2px solid #55534e;
  background: #d4d0c8;
  font-size: 11px;
}
```
FILE: script.js
```js
// grid: evenly spaced verticals, one horizontal per 25 000
var d = "";
for (var i = 0; i <= 152; i++) {
  d += "M" + (Math.floor(26 + i * 7.7) + 0.5) + " 112V937";
}
for (var j = 0; j < 17; j++) {
  d += "M17 " + (Math.floor(132 + j * 49.87) + 0.5) + "H1200";
}
document.getElementById("grid").setAttribute("d", d);
```
